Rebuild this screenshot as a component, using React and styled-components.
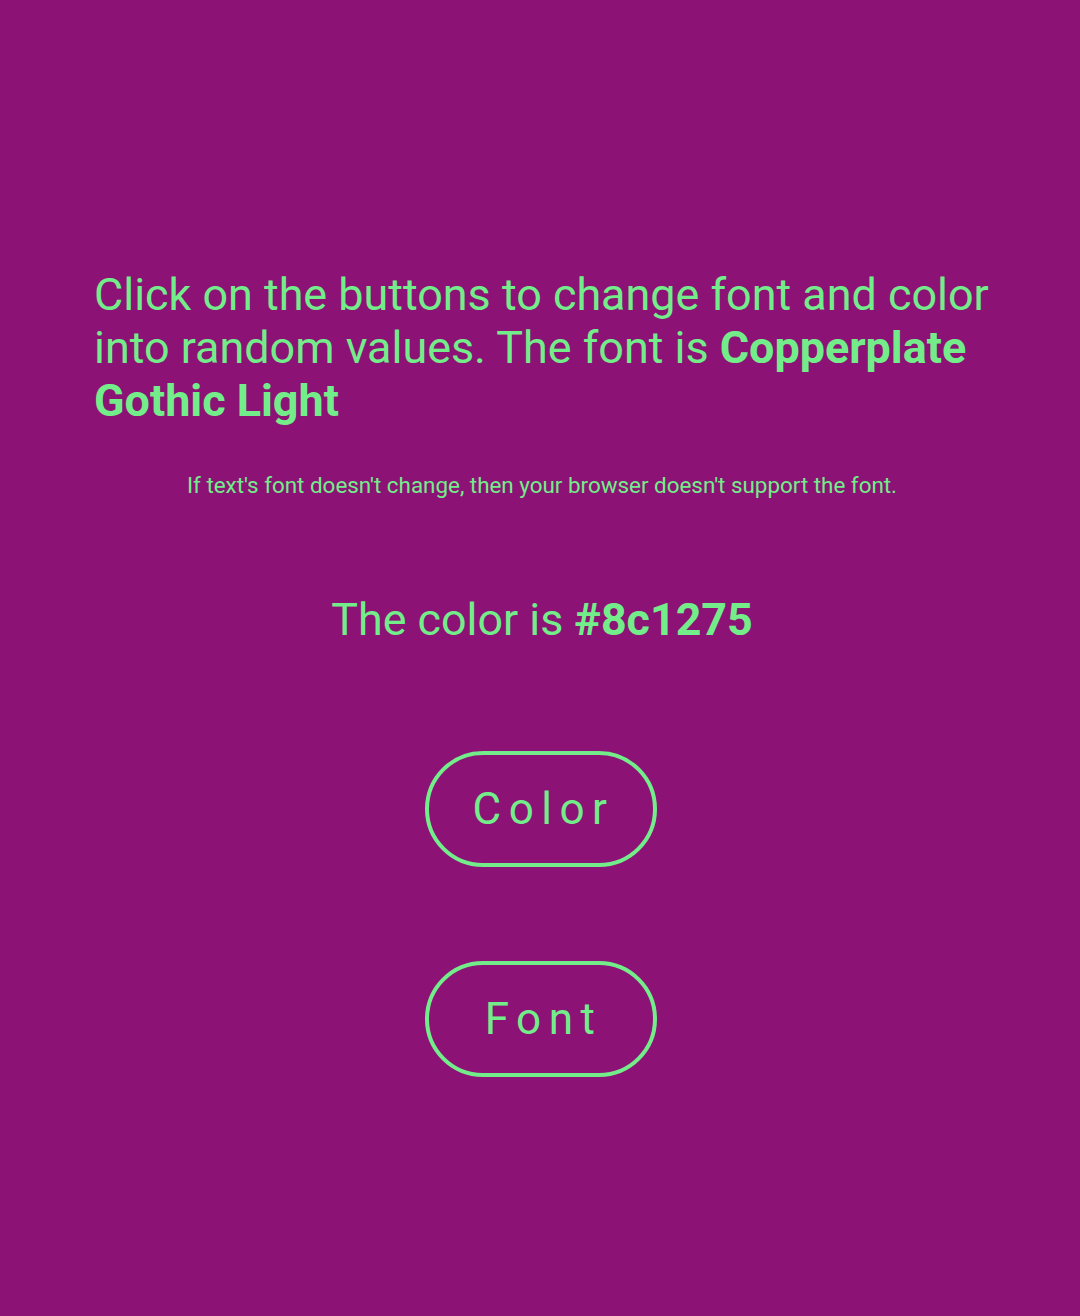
import React from 'react';
import styled, { createGlobalStyle } from 'styled-components';

const bg = '#8c1275';
const fg = '#73ed8a';

const GlobalStyle = createGlobalStyle`
  html, body {
    margin: 0;
    padding: 0;
    background: ${bg};
  }
  body {
    font-family: Roboto, "Liberation Sans", sans-serif;
    color: ${fg};
  }
`;

const Page = styled.main`
  min-height: 1316px;
  box-sizing: border-box;
  padding: 268px 90px 0 94px;
  display: flex;
  flex-direction: column;
  align-items: center;
`;

const Heading = styled.h1`
  align-self: stretch;
  margin: 0;
  font-size: 44.9px;
  line-height: 53px;
  font-weight: 400;

  strong {
    font-weight: 700;
  }
`;

const Note = styled.p`
  margin: 45px 0 0 0;
  font-size: 22.4px;
  line-height: 26px;
  text-align: center;
`;

const ColorLine = styled.p`
  margin: 95px 0 0 0;
  font-size: 44.8px;
  line-height: 53px;
  text-align: center;

  strong {
    font-weight: 700;
  }
`;

const Button = styled.button`
  margin: ${props => props.gap}px 2px 0 0;
  width: 232px;
  height: 116px;
  box-sizing: border-box;
  border: 4px solid ${fg};
  border-radius: 58px;
  background: transparent;
  color: ${fg};
  font-family: Roboto, "Liberation Sans", sans-serif;
  font-size: 44px;
  letter-spacing: 7.5px;
  padding: 0 0 0 5px;
  cursor: pointer;
`;

const App = () => {
  const color = '#8c1275';
  return (
    <>
      <GlobalStyle />
      <Page>
        <Heading>
          Click on the buttons to change font and color into random values. The font is{' '}
          <strong>Copperplate Gothic Light</strong>
        </Heading>
        <Note>If text's font doesn't change, then your browser doesn't support the font.</Note>
        <ColorLine>
          The color is <strong>{color}</strong>
        </ColorLine>
        <Button gap={105}>Color</Button>
        <Button gap={94}>Font</Button>
      </Page>
    </>
  );
};

export default App;
